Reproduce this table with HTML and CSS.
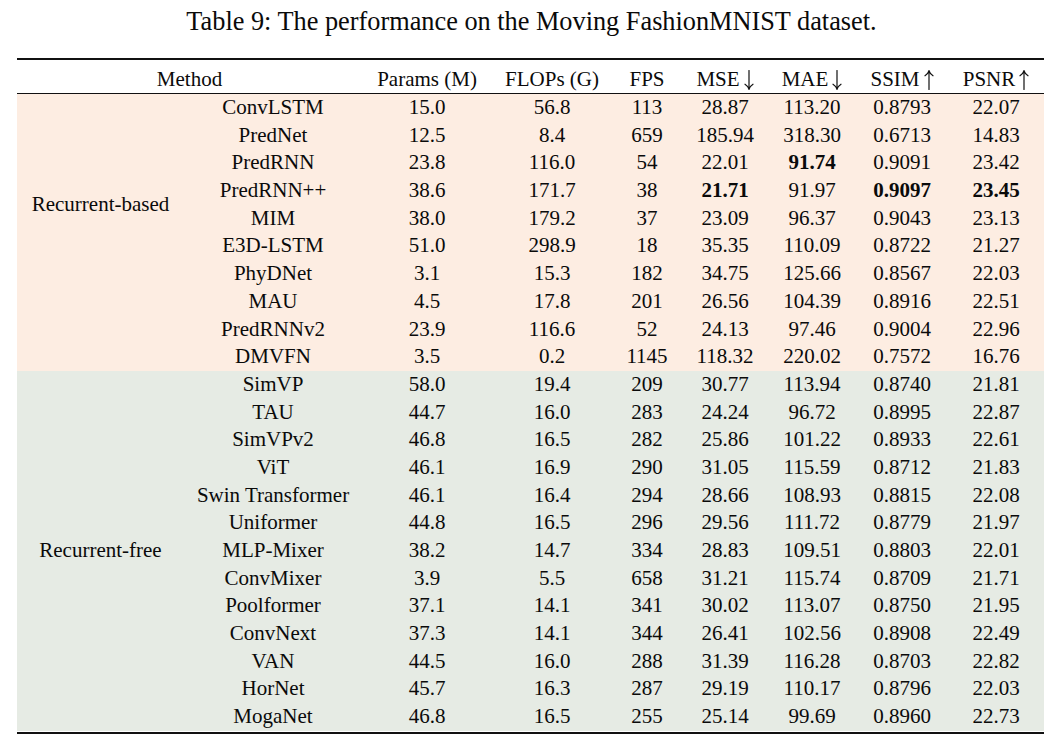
FILE: index.html
```html
<!DOCTYPE html>
<html>
<head>
<meta charset="utf-8">
<link rel="stylesheet" href="styles.css">
</head>
<body>
<div class="caption">Table 9: The performance on the Moving FashionMNIST dataset.</div>
<div class="table-wrap">
<table class="results">
<colgroup>
<col class="c-group"><col class="c-method"><col class="c-params"><col class="c-flops"><col class="c-fps"><col class="c-mse"><col class="c-mae"><col class="c-ssim"><col class="c-psnr">
</colgroup>
<thead>
<tr>
<th colspan="2">Method</th><th>Params (M)</th><th>FLOPs (G)</th><th>FPS</th>
<th>MSE<svg class="arrow" viewBox="0 0 10 20" width="10" height="20"><path d="M5 0.5V19M1 14.2Q4 16 5 19.3Q6 16 9 14.2"/></svg></th>
<th>MAE<svg class="arrow" viewBox="0 0 10 20" width="10" height="20"><path d="M5 0.5V19M1 14.2Q4 16 5 19.3Q6 16 9 14.2"/></svg></th>
<th>SSIM<svg class="arrow" viewBox="0 0 10 20" width="10" height="20"><path d="M5 19.5V1M1 5.8Q4 4 5 0.7Q6 4 9 5.8"/></svg></th>
<th>PSNR<svg class="arrow" viewBox="0 0 10 20" width="10" height="20"><path d="M5 19.5V1M1 5.8Q4 4 5 0.7Q6 4 9 5.8"/></svg></th>
</tr>
</thead>
<tbody class="sec-rb">
<tr><td rowspan="10" class="group group-rb">Recurrent-based</td><td>ConvLSTM</td><td>15.0</td><td>56.8</td><td>113</td><td>28.87</td><td>113.20</td><td>0.8793</td><td>22.07</td></tr>
<tr><td>PredNet</td><td>12.5</td><td>8.4</td><td>659</td><td>185.94</td><td>318.30</td><td>0.6713</td><td>14.83</td></tr>
<tr><td>PredRNN</td><td>23.8</td><td>116.0</td><td>54</td><td>22.01</td><td class="best">91.74</td><td>0.9091</td><td>23.42</td></tr>
<tr><td>PredRNN++</td><td>38.6</td><td>171.7</td><td>38</td><td class="best">21.71</td><td>91.97</td><td class="best">0.9097</td><td class="best">23.45</td></tr>
<tr><td>MIM</td><td>38.0</td><td>179.2</td><td>37</td><td>23.09</td><td>96.37</td><td>0.9043</td><td>23.13</td></tr>
<tr><td>E3D-LSTM</td><td>51.0</td><td>298.9</td><td>18</td><td>35.35</td><td>110.09</td><td>0.8722</td><td>21.27</td></tr>
<tr><td>PhyDNet</td><td>3.1</td><td>15.3</td><td>182</td><td>34.75</td><td>125.66</td><td>0.8567</td><td>22.03</td></tr>
<tr><td>MAU</td><td>4.5</td><td>17.8</td><td>201</td><td>26.56</td><td>104.39</td><td>0.8916</td><td>22.51</td></tr>
<tr><td>PredRNNv2</td><td>23.9</td><td>116.6</td><td>52</td><td>24.13</td><td>97.46</td><td>0.9004</td><td>22.96</td></tr>
<tr><td>DMVFN</td><td>3.5</td><td>0.2</td><td>1145</td><td>118.32</td><td>220.02</td><td>0.7572</td><td>16.76</td></tr>
</tbody>
<tbody class="sec-rf">
<tr><td rowspan="13" class="group group-rf">Recurrent-free</td><td>SimVP</td><td>58.0</td><td>19.4</td><td>209</td><td>30.77</td><td>113.94</td><td>0.8740</td><td>21.81</td></tr>
<tr><td>TAU</td><td>44.7</td><td>16.0</td><td>283</td><td>24.24</td><td>96.72</td><td>0.8995</td><td>22.87</td></tr>
<tr><td>SimVPv2</td><td>46.8</td><td>16.5</td><td>282</td><td>25.86</td><td>101.22</td><td>0.8933</td><td>22.61</td></tr>
<tr><td>ViT</td><td>46.1</td><td>16.9</td><td>290</td><td>31.05</td><td>115.59</td><td>0.8712</td><td>21.83</td></tr>
<tr><td>Swin Transformer</td><td>46.1</td><td>16.4</td><td>294</td><td>28.66</td><td>108.93</td><td>0.8815</td><td>22.08</td></tr>
<tr><td>Uniformer</td><td>44.8</td><td>16.5</td><td>296</td><td>29.56</td><td>111.72</td><td>0.8779</td><td>21.97</td></tr>
<tr><td>MLP-Mixer</td><td>38.2</td><td>14.7</td><td>334</td><td>28.83</td><td>109.51</td><td>0.8803</td><td>22.01</td></tr>
<tr><td>ConvMixer</td><td>3.9</td><td>5.5</td><td>658</td><td>31.21</td><td>115.74</td><td>0.8709</td><td>21.71</td></tr>
<tr><td>Poolformer</td><td>37.1</td><td>14.1</td><td>341</td><td>30.02</td><td>113.07</td><td>0.8750</td><td>21.95</td></tr>
<tr><td>ConvNext</td><td>37.3</td><td>14.1</td><td>344</td><td>26.41</td><td>102.56</td><td>0.8908</td><td>22.49</td></tr>
<tr><td>VAN</td><td>44.5</td><td>16.0</td><td>288</td><td>31.39</td><td>116.28</td><td>0.8703</td><td>22.82</td></tr>
<tr><td>HorNet</td><td>45.7</td><td>16.3</td><td>287</td><td>29.19</td><td>110.17</td><td>0.8796</td><td>22.03</td></tr>
<tr><td>MogaNet</td><td>46.8</td><td>16.5</td><td>255</td><td>25.14</td><td>99.69</td><td>0.8960</td><td>22.73</td></tr>
</tbody>
</table>
</div>
</body>
</html>
```
FILE: styles.css
```css
html, body {
  margin: 0;
  padding: 0;
  background: #ffffff;
}

body {
  font-family: "Liberation Serif", "Times New Roman", serif;
  color: #0a0a0a;
}

.caption {
  margin-top: 7px;
  font-size: 26.3px;
  line-height: 30px;
  text-align: center;
}

.table-wrap {
  width: 1027px;
  margin-top: 21px;
  margin-left: 17px;
  border-top: 2px solid #111;
  border-bottom: 2px solid #111;
  padding-bottom: 1.5px;
}

.results {
  width: 1027px;
  table-layout: fixed;
  border-collapse: separate;
  border-spacing: 0;
  font-size: 21px;
}

.c-group { width: 167px; }
.c-method { width: 178px; }
.c-params { width: 130px; }
.c-flops { width: 120px; }
.c-fps { width: 70px; }
.c-mse { width: 86px; }
.c-mae { width: 88px; }
.c-ssim { width: 92px; }
.c-psnr { width: 96px; }

.results th {
  font-weight: normal;
  text-align: center;
  white-space: nowrap;
  padding: 5px 0 0 0;
  line-height: 28px;
  border-bottom: 1px solid #111;
}

.results td {
  text-align: center;
  white-space: nowrap;
  padding: 0;
  line-height: 27.68px;
  height: 27.68px;
}

.sec-rb td {
  background: #fdede2;
}

.sec-rf td {
  background: #e6ebe4;
}

.group-rb {
  vertical-align: top;
  padding-top: 96.9px !important;
}

.group-rf {
  vertical-align: middle;
}

.best {
  font-weight: bold;
}

.arrow {
  display: inline-block;
  vertical-align: -4px;
  margin-left: 4px;
  fill: none;
  stroke: #111;
  stroke-width: 1.2;
  stroke-linecap: round;
}
```
